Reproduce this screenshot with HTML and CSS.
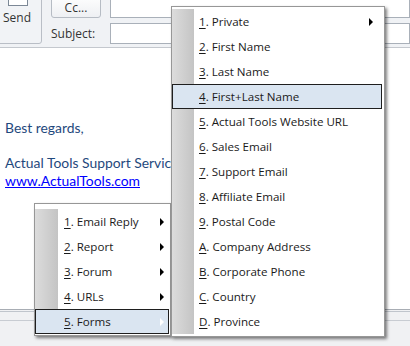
FILE: index.html
```html
<!DOCTYPE html>
<html>
<head>
<meta charset="utf-8">
<link rel="stylesheet" href="styles.css">
</head>
<body>
<div class="window">
  <div class="ribbon">
    <div class="send">
      <div class="send-icon"><span></span></div>
      <div class="send-label">Send</div>
    </div>
    <div class="fields">
      <div class="field-row">
        <div class="cc-btn">Cc...</div>
        <div class="input input-to"></div>
      </div>
      <div class="field-row row-subject">
        <div class="label">Subject:</div>
        <div class="input"></div>
      </div>
    </div>
  </div>
  <div class="body">
    <p class="line">Best regards,</p>
    <p class="line gap">Actual Tools Support Service</p>
    <p class="line"><a class="link" href="#">www.ActualTools.com</a></p>
  </div>
  <div class="status">
    <div class="status-band"></div>
    <div class="status-band2"></div>
  </div>

  <div class="menu menu-main">
    <div class="item"><span class="txt"><u>1</u>. Email Reply</span><span class="arrow"></span></div>
    <div class="item"><span class="txt"><u>2</u>. Report</span><span class="arrow"></span></div>
    <div class="item"><span class="txt"><u>3</u>. Forum</span><span class="arrow"></span></div>
    <div class="item"><span class="txt"><u>4</u>. URLs</span><span class="arrow"></span></div>
    <div class="item active"><span class="txt"><u>5</u>. Forms</span><span class="arrow"></span></div>
  </div>

  <div class="menu menu-sub">
    <div class="item"><span class="txt"><u>1</u>. Private</span><span class="arrow"></span></div>
    <div class="item"><span class="txt"><u>2</u>. First Name</span></div>
    <div class="item"><span class="txt"><u>3</u>. Last Name</span></div>
    <div class="item active"><span class="txt"><u>4</u>. First+Last Name</span></div>
    <div class="item"><span class="txt"><u>5</u>. Actual Tools Website URL</span></div>
    <div class="item"><span class="txt"><u>6</u>. Sales Email</span></div>
    <div class="item"><span class="txt"><u>7</u>. Support Email</span></div>
    <div class="item"><span class="txt"><u>8</u>. Affiliate Email</span></div>
    <div class="item"><span class="txt"><u>9</u>. Postal Code</span></div>
    <div class="item"><span class="txt"><u>A</u>. Company Address</span></div>
    <div class="item"><span class="txt"><u>B</u>. Corporate Phone</span></div>
    <div class="item"><span class="txt"><u>C</u>. Country</span></div>
    <div class="item"><span class="txt"><u>D</u>. Province</span></div>
  </div>
</div>
</body>
</html>
```

FILE: styles.css
```css
* { box-sizing: border-box; }
html, body { margin: 0; padding: 0; }
body {
  width: 410px;
  height: 346px;
  overflow: hidden;
  font-family: "Open Sans", "Noto Sans", sans-serif;
}
.window {
  position: relative;
  width: 410px;
  height: 346px;
  display: flex;
  flex-direction: column;
  background: #fff;
  overflow: hidden;
}
.ribbon {
  height: 48px;
  flex: none;
  display: flex;
  background: #f0f2f5;
  border-bottom: 1px solid #c4c8ce;
}
.send {
  width: 46px;
  height: 54px;
  margin: -10px 0 0 -4px;
  border: 1px solid #b9bec6;
  border-radius: 3px;
  background: #f1f3f6;
  display: flex;
  flex-direction: column;
  align-items: flex-start;
}
.send-icon {
  height: 15px;
  width: 100%;
}
.send-icon span {
  display: block;
  margin: 0 0 0 11px;
  width: 20px;
  height: 15px;
  border: 1px solid #7c8896;
  background: #fff;
  box-shadow: -8px -3px 0 -7px #5b8bc9;
}
.send-label {
  margin: 4px 0 0 6px;
  font-size: 12px;
  line-height: 16px;
  color: #333;
}
.fields {
  flex: 1;
  display: flex;
  flex-direction: column;
  margin-left: 9px;
}
.field-row {
  display: flex;
  align-items: stretch;
}
.cc-btn {
  width: 50px;
  height: 24px;
  margin-top: -6px;
  border: 1px solid #b6bcc4;
  border-radius: 0 0 3px 3px;
  background: linear-gradient(#ffffff, #eef0f3);
  font-size: 12px;
  color: #333;
  text-align: center;
  line-height: 26px;
}
.input {
  flex: 1;
  margin-left: 9px;
  background: #fff;
  border: 1px solid #a9b0b9;
}
.input-to {
  height: 24px;
  margin-top: -6px;
}
.row-subject {
  margin-top: 5px;
  height: 21px;
}
.label {
  width: 50px;
  font-size: 12px;
  color: #333;
  line-height: 21px;
}
.body {
  flex: 1;
  padding: 71px 0 0 5px;
  font-family: Lato, "Liberation Sans", sans-serif;
  font-size: 13.9px;
  color: #1f497d;
}
.line {
  margin: 0;
  line-height: 18px;
  white-space: nowrap;
}
.gap { margin-top: 17px; }
.link { color: #0000ff; text-decoration: underline; }
.status {
  height: 37px;
  flex: none;
  background: #f0f1f3;
  border-top: 1px solid #a8adb4;
}
.status-band {
  height: 1px;
  margin-top: 1px;
  background: #c0c5cc;
}
.status-band2 {
  height: 1px;
  margin-top: 8px;
  background: #c8ccd2;
}

/* Menus */
.menu {
  position: absolute;
  background: #fff;
  border: 1px solid #979797;
  box-shadow: 2px 2px 3px rgba(0,0,0,0.5);
  font-family: "Open Sans", "Noto Sans", sans-serif;
  font-size: 11.6px;
  color: #1a1a1a;
}
.menu-main {
  left: 34px;
  top: 203px;
  width: 137px;
  padding: 5px 1px 1px 0;
}
.menu-sub {
  left: 171px;
  top: 6px;
  width: 214px;
  padding: 2px 2px 2px 0;
}
.item {
  position: relative;
  height: 25px;
  display: flex;
  align-items: center;
  border: 1px solid transparent;
  white-space: nowrap;
}
.item::before {
  content: "";
  position: absolute;
  left: -1px;
  top: -1px;
  bottom: -1px;
  background: linear-gradient(to right, #dcdcdc, #c4c4c4);
}
.menu-main .item::before { width: 23px; }
.menu-sub .item::before { width: 22px; }
.item.active {
  background: #dae5f1;
  border-color: #1e1e1e;
}
.item.active::before { display: none; }
.menu-main .txt { margin-left: 28px; }
.menu-sub .txt { margin-left: 26px; }
.item u { text-underline-offset: 2px; }
.arrow {
  position: absolute;
  width: 0;
  height: 0;
  border-left: 4px solid #000;
  border-top: 4px solid transparent;
  border-bottom: 4px solid transparent;
  top: 8px;
}
.menu-main .arrow { right: 4px; }
.menu-sub .arrow { right: 8px; }
.item.active .arrow { border-left-color: #fff; }
```
